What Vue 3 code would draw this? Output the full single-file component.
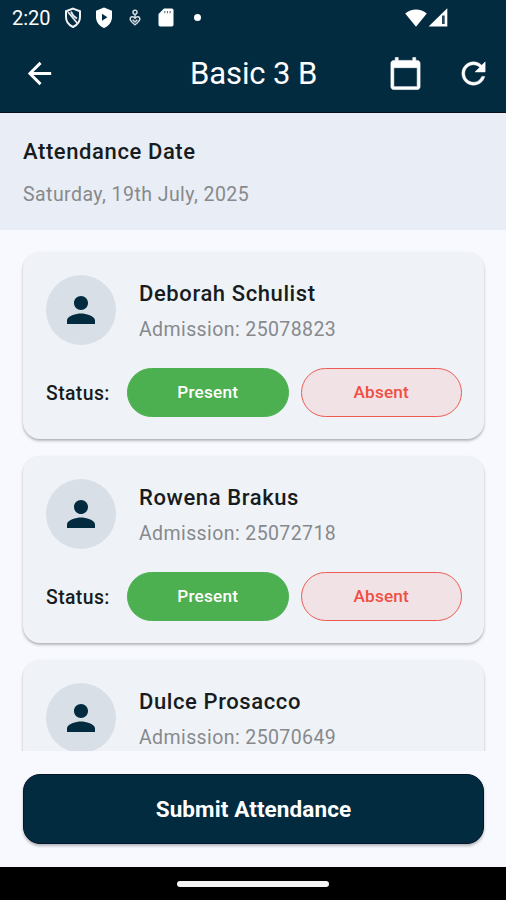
<template>
  <div class="screen">
    <header class="header">
      <div class="status-bar">
        <span class="clock">2:20</span>
        <svg class="status-icon shield" viewBox="0 0 18 22">
          <path d="M9 1.6 L16 4.2 V10 C16 14.6 13 18.2 9 20 C5 18.2 2 14.6 2 10 V4.2 Z" fill="none" stroke="#f0f4f6" stroke-width="2" />
          <path d="M4 5 L13.5 16.5 M7 4.5 Q8.5 9 13 11.5" fill="none" stroke="#e4eaee" stroke-width="1.8" />
        </svg>
        <svg class="status-icon play" viewBox="0 0 18 22">
          <path d="M9 .6 L17 3.8 V10 C17 15 13.6 19.2 9 21 C4.4 19.2 1 15 1 10 V3.8 Z" fill="#fff" />
          <path d="M7 6.8 L12.4 10.3 L7 13.8 Z" fill="#022b40" />
        </svg>
        <svg class="status-icon care" viewBox="0 0 12 18">
          <g fill="none" stroke="#d5dde2" stroke-width="1.5">
            <circle cx="6" cy="3.2" r="2" />
            <path d="M6 9.3 C4.2 6.8 1 7.6 1.2 10.2 C1.4 12.3 4 14 6 15.8 C8 14 10.6 12.3 10.8 10.2 C11 7.6 7.8 6.8 6 9.3 Z" />
            <path d="M3.6 10.7 L6 13 L8.4 10.7 M6 5.8 V9" />
          </g>
        </svg>
        <svg class="status-icon sd" viewBox="0 0 16 19">
          <path d="M6 .5 H13.8 Q15.5 .5 15.5 2.2 V16.8 Q15.5 18.5 13.8 18.5 H2.2 Q.5 18.5 .5 16.8 V6 Z" fill="#fff" />
          <path d="M6.8 3 V5.3 M9.5 3 V5.3 M12.2 3 V5.3" stroke="#5b7482" stroke-width="1.1" />
        </svg>
        <span class="dot"></span>
        <svg class="status-icon wifi" viewBox="0 0 22 18">
          <path d="M11 17.8 L.2 4.4 C6.4 -.9 15.6 -.9 21.8 4.4 Z" fill="#fff" />
        </svg>
        <svg class="status-icon signal" viewBox="0 0 20 19">
          <path d="M19.3 .3 V18.4 H.6 Z" fill="#fff" />
          <path d="M14 7.5 H16.7 V16 H14 Z" fill="#29485a" />
        </svg>
      </div>
      <div class="app-bar">
        <button class="icon-button" aria-label="Back">
          <svg width="35" height="35" viewBox="0 0 24 24">
            <path d="M20 11H7.83l5.59-5.59L12 4l-8 8 8 8 1.41-1.41L7.83 13H20v-2z" />
          </svg>
        </button>
        <h1 class="title">Basic 3 B</h1>
        <button class="icon-button calendar" aria-label="Pick date">
          <svg width="35" height="35" viewBox="0 0 24 24">
            <path d="M20 3h-1V1h-2v2H7V1H5v2H4c-1.1 0-2 .9-2 2v16c0 1.1.9 2 2 2h16c1.1 0 2-.9 2-2V5c0-1.1-.9-2-2-2zm0 18H4V8h16v13z" stroke="#fff" stroke-width="0.4" />
          </svg>
        </button>
        <button class="icon-button refresh" aria-label="Refresh">
          <svg width="35" height="35" viewBox="0 0 24 24">
            <path d="M17.65 6.35C16.2 4.9 14.21 4 12 4c-4.42 0-7.99 3.58-7.99 8s3.57 8 7.99 8c3.73 0 6.84-2.55 7.73-6h-2.08c-.82 2.33-3.04 4-5.65 4-3.31 0-6-2.69-6-6s2.69-6 6-6c1.66 0 3.14.69 4.22 1.78L13 11h7V4l-2.35 2.35z" stroke="#fff" stroke-width="0.3" />
          </svg>
        </button>
      </div>
    </header>

    <section class="date-panel">
      <h2 class="date-label">Attendance Date</h2>
      <p class="date-value">{{ date }}</p>
    </section>

    <main class="student-list">
      <article v-for="student in students" :key="student.admission" class="card">
        <div class="student">
          <div class="avatar">
            <svg width="42" height="42" viewBox="0 0 24 24">
              <path d="M12 12c2.21 0 4-1.79 4-4s-1.79-4-4-4-4 1.79-4 4 1.79 4 4 4zm0 2c-2.67 0-8 1.34-8 4v2h16v-2c0-2.66-5.33-4-8-4z" />
            </svg>
          </div>
          <div class="info">
            <h3 class="name">{{ student.name }}</h3>
            <p class="admission">Admission: {{ student.admission }}</p>
          </div>
        </div>
        <div class="status-row">
          <span class="status-label">Status:</span>
          <button
            class="choice"
            :class="{ present: student.status === 'present' }"
            @click="student.status = 'present'"
          >
            Present
          </button>
          <button class="choice absent" @click="student.status = 'absent'">Absent</button>
        </div>
      </article>
    </main>

    <footer class="footer">
      <button class="submit">Submit Attendance</button>
    </footer>
    <div class="nav-bar"><span class="handle"></span></div>
  </div>
</template>

<script setup>
import { ref } from 'vue';

const date = 'Saturday, 19th July, 2025';

const students = ref([
  { name: 'Deborah Schulist', admission: '25078823', status: 'present' },
  { name: 'Rowena Brakus', admission: '25072718', status: 'present' },
  { name: 'Dulce Prosacco', admission: '25070649', status: 'present' }
]);
</script>

<style>
body {
  margin: 0;
  overflow: hidden;
}
</style>

<style scoped>
.screen {
  display: flex;
  flex-direction: column;
  width: 506px;
  height: 900px;
  overflow: hidden;
  background: #f8f9ff;
  color: #171c20;
  font-family: Roboto, sans-serif;
}

h1,
h2,
h3,
p {
  margin: 0;
}

button {
  font-family: inherit;
  border: none;
  padding: 0;
  cursor: pointer;
}

svg {
  display: block;
}

.header {
  flex: none;
  box-sizing: border-box;
  height: 113px;
  background: #022b40;
  border-bottom: 1px solid #06101e;
  color: #fff;
}

.status-bar {
  display: flex;
  align-items: center;
  height: 35px;
  padding-left: 12px;
}

.clock {
  width: 52px;
  padding-top: 1px;
  font-size: 20px;
}

.status-icon {
  flex: none;
}

.shield {
  width: 18px;
  height: 22px;
}

.play {
  width: 18px;
  height: 22px;
  margin-left: 13px;
}

.care {
  width: 12px;
  height: 18px;
  margin-left: 16px;
}

.sd {
  width: 16px;
  height: 19px;
  margin-left: 17px;
}

.dot {
  width: 7px;
  height: 7px;
  margin-left: 20px;
  border-radius: 50%;
  background: #fff;
}

.wifi {
  width: 22px;
  height: 18px;
  margin-left: 204px;
}

.signal {
  width: 20px;
  height: 19px;
  margin-left: 1px;
}

.app-bar {
  display: grid;
  grid-template-columns: 79px 1fr 62px 71px;
  align-items: center;
  height: 77px;
}

.icon-button {
  display: flex;
  justify-content: center;
  background: none;
  fill: #fff;
}

.calendar {
  justify-content: flex-start;
  padding-left: 15px;
}

.refresh {
  justify-content: flex-start;
  padding-left: 21px;
}

.title {
  padding-left: 111px;
  font-size: 31px;
  font-weight: 400;
  line-height: 36px;
  letter-spacing: -0.1px;
  white-space: nowrap;
}

.date-panel {
  flex: none;
  box-sizing: border-box;
  height: 117px;
  padding: 25px 23px 0;
  background: #e9edf5;
}

.date-label {
  font-size: 22px;
  font-weight: 500;
  line-height: 28px;
  letter-spacing: 0.6px;
}

.date-value {
  margin-top: 15px;
  color: #87898c;
  font-size: 19.5px;
  line-height: 27px;
  letter-spacing: 0.45px;
}

.student-list {
  flex: none;
  box-sizing: border-box;
  height: 521px;
  padding: 22px 22px 0 23px;
  overflow: hidden;
}

.card {
  box-sizing: border-box;
  height: 187px;
  margin-bottom: 17px;
  padding: 23px 22px 0 23px;
  border-radius: 17px;
  background: #eff3f8;
  box-shadow: 0 2px 3px rgba(0, 0, 0, 0.24), 0 1px 2px rgba(0, 0, 0, 0.08);
}

.student {
  display: flex;
  gap: 23px;
}

.avatar {
  display: flex;
  align-items: center;
  justify-content: center;
  width: 70px;
  height: 70px;
  border-radius: 50%;
  background: #d9dfe6;
  fill: #022b40;
}

.info {
  padding-top: 5px;
}

.name {
  font-size: 22px;
  font-weight: 500;
  line-height: 28px;
  letter-spacing: 0.6px;
}

.admission {
  margin-top: 9px;
  color: #87898c;
  font-size: 19.5px;
  line-height: 26px;
  letter-spacing: 0.4px;
}

.status-row {
  display: flex;
  align-items: center;
  margin-top: 23px;
}

.status-label {
  width: 81px;
  padding-top: 1px;
  font-size: 19.4px;
  font-weight: 500;
  letter-spacing: 0.4px;
}

.choice {
  box-sizing: border-box;
  flex: 1;
  height: 49px;
  padding-bottom: 1px;
  border: 1px solid #4caf50;
  border-radius: 25px;
  background: #e0eee6;
  color: #4caf50;
  font-size: 17.2px;
  font-weight: 500;
  letter-spacing: 0.2px;
}

.present {
  background: #4caf50;
  color: #fff;
}

.absent {
  margin-left: 12px;
  border-color: #ee5a52;
  background: #f1e2e5;
  color: #f04e43;
}

.footer {
  flex: none;
  box-sizing: border-box;
  height: 116px;
  padding: 23px 22px 0 23px;
}

.submit {
  box-sizing: border-box;
  width: 100%;
  height: 70px;
  border: 1px solid #04162b;
  border-radius: 17px;
  background: #022b40;
  box-shadow: 0 2px 3px rgba(0, 0, 0, 0.28);
  color: #fff;
  font-size: 22.5px;
  font-weight: 700;
  letter-spacing: 0.1px;
}

.nav-bar {
  display: flex;
  flex: none;
  align-items: center;
  justify-content: center;
  height: 33px;
  background: #000;
}

.handle {
  width: 152px;
  height: 6px;
  border-radius: 3px;
  background: #f4f4f4;
}
</style>
